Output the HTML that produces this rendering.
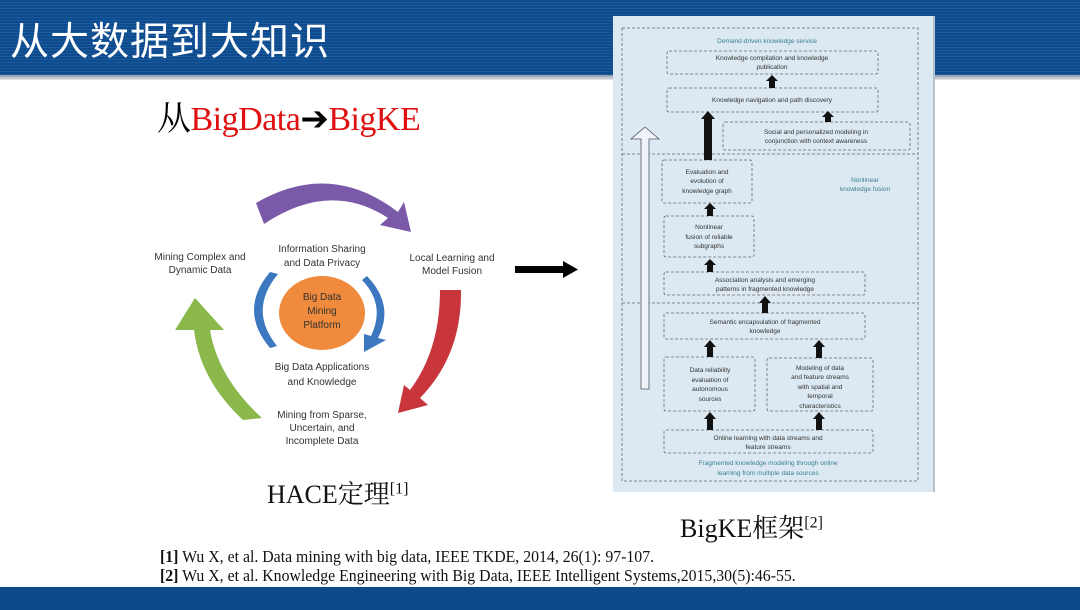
<!DOCTYPE html>
<html><head><meta charset="utf-8"><style>
body{margin:0;width:1080px;height:610px;overflow:hidden;background:#fff;position:relative;font-family:"Liberation Sans","Noto Sans CJK SC",sans-serif}
.hdr{position:absolute;left:0;top:0;width:1080px;height:75px;background:repeating-linear-gradient(180deg,#0f4a8c 0 2px,#175a9e 2px 3px)}
.hdr::after{content:"";position:absolute;left:0;top:75px;width:1080px;height:5px;background:linear-gradient(#8a96a6,#e6e9ee)}
.title{position:absolute;left:10px;top:16px;font-size:39px;color:#fff;font-family:"Noto Sans CJK SC",sans-serif;letter-spacing:1px;line-height:46px}
.foot{position:absolute;left:0;top:587px;width:1080px;height:23px;background:#0d4a8a}
.sub{position:absolute;left:157px;top:91px;font-family:"Liberation Serif","Noto Serif CJK SC",serif;font-size:34px;color:#000;white-space:nowrap;letter-spacing:-0.5px}
.red{color:#e01010}
.cap{position:absolute;font-family:"Liberation Serif","Noto Serif CJK SC",serif;font-size:26px;color:#111;white-space:nowrap}
.cap sup{font-size:16px}
.ref{position:absolute;left:160px;font-family:"Liberation Serif",serif;font-size:17px;color:#111;white-space:nowrap;transform:scaleX(.93);transform-origin:left}
.fig{position:absolute;left:613px;top:16px;width:320px;height:476px;background:#dde9f2;border-right:2px solid #b5c2cc}
.fig svg text{font-family:"Liberation Sans",sans-serif;font-size:6.5px;fill:#333}
.hs text{font-family:"Liberation Sans",sans-serif;font-size:10px;fill:#333}
</style></head><body>
<div class="hdr"></div>
<div class="title">从大数据到大知识</div>
<div class="sub">从<span class="red">BigData</span><b style="font-family:'DejaVu Sans'">➔</b><span class="red">BigKE</span></div>

<svg class="hs" style="position:absolute;left:0;top:0" width="600" height="480">
<path d="M256,203 Q330,160 398,212 L404,202 L411,232 L380,225 L388,218 Q330,180 264,224 Z" fill="#7a5aa8"/>
<path d="M243,420 Q200,380 194,330 L175,330 L195,298 L224,330 L210,330 Q218,378 262,418 Z" fill="#8ab84a"/>
<path d="M440,290 L461,290 Q462,355 420,398 L428,405 L398,413 L404,385 L410,390 Q440,350 440,290 Z" fill="#c8363c"/>
<path d="M278,274 Q248,310 277,346 L270,348 Q238,310 270,272 Z" fill="#3b78bf"/>
<path d="M367,276 Q395,305 378,338 L386,340 L364,352 L364,334 L371,336 Q386,305 362,280 Z" fill="#3b78bf"/>
<ellipse cx="322" cy="313" rx="43" ry="37" fill="#f08a3c"/>
<g text-anchor="middle" fill="#4a3728">
<text x="322" y="300" font-size="10" fill="#5a3a1a">Big Data</text>
<text x="322" y="314" font-size="10" fill="#5a3a1a">Mining</text>
<text x="322" y="328" font-size="10" fill="#5a3a1a">Platform</text>
<text x="322" y="252">Information Sharing</text>
<text x="322" y="266">and Data Privacy</text>
<text x="322" y="370">Big Data Applications</text>
<text x="322" y="385">and Knowledge</text>
<text x="322" y="418">Mining from Sparse,</text>
<text x="322" y="431">Uncertain, and</text>
<text x="322" y="444">Incomplete Data</text>
<text x="200" y="260">Mining Complex and</text>
<text x="200" y="273">Dynamic Data</text>
<text x="452" y="261">Local Learning and</text>
<text x="452" y="274">Model Fusion</text>
</g>
<rect x="515" y="266" width="52" height="7" fill="#000"/>
<path d="M563,261 L578,269.5 L563,278 Z" fill="#000"/>
</svg>

<div class="fig"><svg width="320" height="476" viewBox="613 16 320 476">
<g fill="none" stroke="#666" stroke-width=".8" stroke-dasharray="3,2">
<rect x="622" y="28" width="296" height="453"/>
<line x1="622" y1="154" x2="918" y2="154"/><line x1="622" y1="303" x2="918" y2="303"/>
<rect x="667" y="51" width="211" height="23" rx="2"/>
<rect x="667" y="88" width="211" height="24" rx="2"/>
<rect x="723" y="122" width="187" height="28" rx="2"/>
<rect x="662" y="160" width="90" height="43" rx="2"/>
<rect x="664" y="216" width="90" height="41" rx="2"/>
<rect x="664" y="272" width="201" height="23" rx="2"/>
<rect x="664" y="313" width="201" height="26" rx="2"/>
<rect x="664" y="357" width="91" height="54" rx="2"/>
<rect x="767" y="358" width="106" height="53" rx="2"/>
<rect x="664" y="430" width="209" height="23" rx="2"/>
</g>
<path d="M641,389 L641,139 L631,139 L645,127 L659,139 L649,139 L649,389 Z" fill="#eef4f8" stroke="#556" stroke-width=".8"/>
<g fill="#111">
<rect x="704" y="118" width="8" height="42"/><path d="M701,119 L708,111 L715,119Z"/>
<rect x="769" y="80" width="6" height="8"/><path d="M766,81 L772,75 L778,81Z"/>
<rect x="825" y="116" width="6" height="6"/><path d="M822,117 L828,111 L834,117Z"/>
<rect x="707" y="208" width="6" height="8"/><path d="M704,209 L710,203 L716,209Z"/>
<rect x="707" y="264" width="6" height="8"/><path d="M704,265 L710,259 L716,265Z"/>
<rect x="762" y="302" width="6" height="11"/><path d="M759,303 L765,296 L771,303Z"/>
<rect x="707" y="346" width="6" height="11"/><path d="M704,347 L710,340 L716,347Z"/>
<rect x="816" y="346" width="6" height="12"/><path d="M813,347 L819,340 L825,347Z"/>
<rect x="707" y="418" width="6" height="12"/><path d="M704,419 L710,412 L716,419Z"/>
<rect x="816" y="418" width="6" height="12"/><path d="M813,419 L819,412 L825,419Z"/>
</g>
<g text-anchor="middle">
<text x="767" y="43" style="fill:#3a8090">Demand-driven knowledge service</text>
<text x="772" y="60">Knowledge compilation and knowledge</text><text x="772" y="69">publication</text>
<text x="772" y="102">Knowledge navigation and path discovery</text>
<text x="816" y="134">Social and personalized modeling in</text><text x="816" y="143">conjunction with context awareness</text>
<text x="707" y="174">Evaluation and</text><text x="707" y="183">evolution of</text><text x="707" y="193">knowledge graph</text>
<text x="865" y="182" style="fill:#3a8090">Nonlinear</text><text x="865" y="191" style="fill:#3a8090">knowledge fusion</text>
<text x="709" y="229">Nonlinear</text><text x="709" y="239">fusion of reliable</text><text x="709" y="248">subgraphs</text>
<text x="765" y="282">Association analysis and emerging</text><text x="765" y="291">patterns in fragmented knowledge</text>
<text x="765" y="324">Semantic encapsulation of fragmented</text><text x="765" y="333">knowledge</text>
<text x="710" y="372">Data reliability</text><text x="710" y="382">evaluation of</text><text x="710" y="391">autonomous</text><text x="710" y="401">sources</text>
<text x="820" y="370">Modeling of data</text><text x="820" y="379">and feature streams</text><text x="820" y="389">with spatial and</text><text x="820" y="398">temporal</text><text x="820" y="408">characteristics</text>
<text x="768" y="440">Online learning with data streams and</text><text x="768" y="449">feature streams</text>
<text x="768" y="465" style="fill:#3a8090">Fragmented knowledge modeling through online</text><text x="768" y="475" style="fill:#3a8090">learning from multiple data sources</text>
</g></svg></div>

<div class="cap" style="left:267px;top:474px">HACE定理<sup>[1]</sup></div>
<div class="cap" style="left:680px;top:508px">BigKE框架<sup>[2]</sup></div>
<div class="ref" style="top:547px"><b>[1]</b> Wu X, et al. Data mining with big data, IEEE TKDE, 2014, 26(1): 97-107.</div>
<div class="ref" style="top:566px"><b>[2]</b> Wu X, et al. Knowledge Engineering with Big Data, IEEE Intelligent Systems,2015,30(5):46-55.</div>
<div class="foot"></div>
</body></html>
